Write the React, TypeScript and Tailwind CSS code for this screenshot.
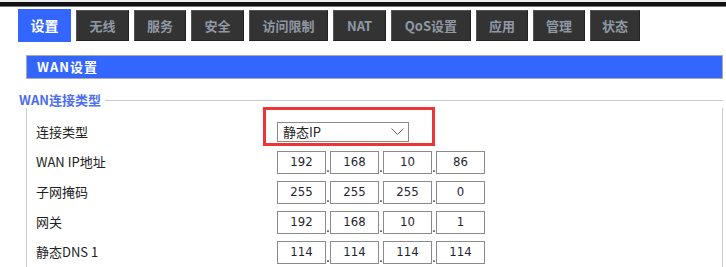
const TABS: { label: string; w: string }[] = [
  { label: '无线', w: 'w-[53px]' },
  { label: '服务', w: 'w-[52px]' },
  { label: '安全', w: 'w-[53px]' },
  { label: '访问限制', w: 'w-[79px]' },
  { label: 'NAT', w: 'w-[53px]' },
  { label: 'QoS设置', w: 'w-[80px]' },
  { label: '应用', w: 'w-[52px]' },
  { label: '管理', w: 'w-[52px]' },
  { label: '状态', w: 'w-[50px]' },
]

const ROWS: { label: string; ip: string[] }[] = [
  { label: 'WAN IP地址', ip: ['192', '168', '10', '86'] },
  { label: '子网掩码', ip: ['255', '255', '255', '0'] },
  { label: '网关', ip: ['192', '168', '10', '1'] },
  { label: '静态DNS 1', ip: ['114', '114', '114', '114'] },
]

const cjk = "font-['Noto_Sans_CJK_SC','Noto_Sans',sans-serif]"

function IpField({ parts }: { parts: string[] }) {
  return (
    <div className="flex items-end">
      {parts.map((p, i) => (
        <div key={i} className="flex items-end">
          {i > 0 && <span className="w-[4px] text-center text-[12px] leading-[14px] text-[#222]">.</span>}
          <div className="flex h-[23px] w-[49px] items-center justify-center border border-[#8a8a8a] bg-white font-['DejaVu_Sans_Condensed','Liberation_Sans',sans-serif] text-[13px] text-[#1f1f33]">
            {p}
          </div>
        </div>
      ))}
    </div>
  )
}

export default function App() {
  return (
    <div className={`relative h-[267px] w-[726px] overflow-hidden bg-white ${cjk}`}>
      <div className="h-[2px] bg-[#eeeeee]" />
      <div className="h-[4px] bg-[#111111]" />
      <div className="h-[1px] bg-[#777777]" />

      <div className="mt-[2px] flex items-start gap-[5px] pl-[18px]">
        <div className="flex h-[33px] w-[53px] items-center justify-center bg-[#3366ff] text-[14px] font-bold text-white">
          设置
        </div>
        {TABS.map((t) => (
          <div
            key={t.label}
            className={`mt-[1px] flex h-[31px] items-center justify-center border border-t-[#555] border-l-[#555] border-r-[#222] border-b-[#222] bg-[#333333] text-[13px] font-bold text-[#9098a4] ${t.w}`}
          >
            {t.label}
          </div>
        ))}
      </div>

      <div className="ml-[26px] mt-[13px] flex h-[24px] w-[697px] items-center border border-[#aaaaaa] bg-[#3366ff] pl-[10px] text-[13px] font-bold tracking-[1px] text-white">
        WAN设置
      </div>

      <div className="mt-[13px] flex h-[16px] items-center pl-[19px]">
        <span className="text-[13px] font-bold leading-[16px] text-[#4d6ef0]">WAN连接类型</span>
        <div className="ml-[4px] mr-[3px] h-px flex-1 bg-[#cccccc]" />
      </div>

      <div className="ml-[26px] w-[697px] border-l border-r border-[#cccccc] pl-[9px] pt-[9px] text-[13px] text-[#222]">
        <div className="flex h-[30px] items-center">
          <div className="w-[241px]">连接类型</div>
          <div className="relative">
            <div className="flex h-[20px] w-[132px] items-center justify-between border border-[#8a8a8a] bg-white pl-[5px] pr-[4px] text-[13px] text-[#222]">
              <span>静态IP</span>
              <svg width="13" height="8" viewBox="0 0 13 8" fill="none">
                <path d="M0.5 0.5 L6.5 6.5 L12.5 0.5" stroke="#666" strokeWidth="1" />
              </svg>
            </div>
            <div className="pointer-events-none absolute -bottom-[4px] -left-[14px] -right-[26px] -top-[15px] border-[3px] border-[#ee3535]" />
          </div>
        </div>
        {ROWS.map((r) => (
          <div key={r.label} className="flex h-[30px] items-center">
            <div className="w-[241px]">{r.label}</div>
            <IpField parts={r.ip} />
          </div>
        ))}
      </div>
    </div>
  )
}
